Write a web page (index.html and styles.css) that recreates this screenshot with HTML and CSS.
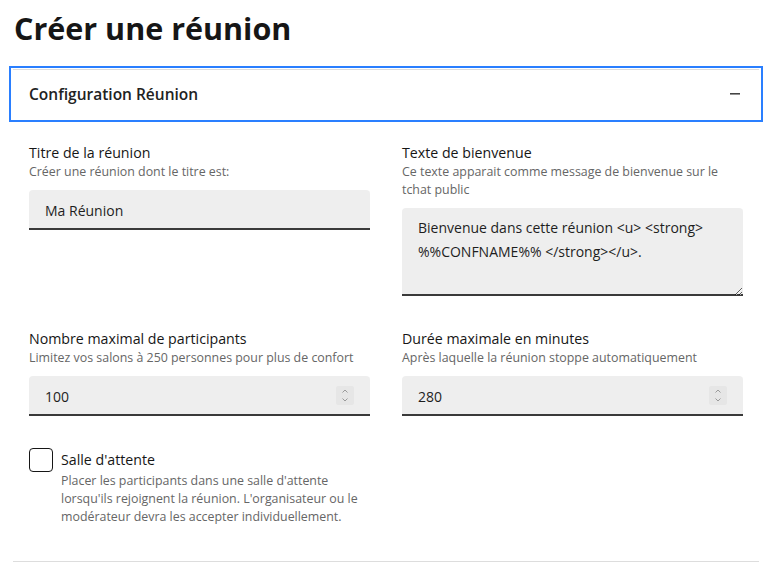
FILE: index.html
```html
<!DOCTYPE html>
<html lang="fr">
<head>
<meta charset="utf-8">
<title>Créer une réunion</title>
<link rel="stylesheet" href="styles.css">
</head>
<body>
<main class="page">
  <h1 class="page-title">Créer une réunion</h1>
  <section class="accordion">
    <button class="accordion-btn" type="button">
      <span>Configuration Réunion</span>
      <svg class="accordion-icon" width="16" height="16" viewBox="0 0 16 16" aria-hidden="true"><path d="M3 7.8h10" stroke="#3a3a3a" stroke-width="1.5" fill="none"/></svg>
    </button>
    <div class="accordion-body">
      <div class="form-grid">
        <div class="field">
          <label class="label" for="title">Titre de la réunion</label>
          <p class="hint">Créer une réunion dont le titre est:</p>
          <div class="input-wrap">
            <input class="input" id="title" type="text" value="Ma Réunion">
          </div>
        </div>
        <div class="field">
          <label class="label" for="welcome">Texte de bienvenue</label>
          <p class="hint">Ce texte apparait comme message de bienvenue sur le tchat public</p>
          <textarea class="input textarea" id="welcome" rows="3">Bienvenue dans cette réunion &lt;u&gt; &lt;strong&gt; %%CONFNAME%% &lt;/strong&gt;&lt;/u&gt;.</textarea>
        </div>
        <div class="field">
          <label class="label" for="max">Nombre maximal de participants</label>
          <p class="hint">Limitez vos salons à 250 personnes pour plus de confort</p>
          <div class="input-wrap">
            <input class="input number" id="max" type="number" value="100">
            <span class="spinner" aria-hidden="true"><svg width="18" height="19" viewBox="0 0 18 19"><path d="M6.5 6.5 9 4l2.5 2.5M6.5 12.5 9 15l2.5-2.5" stroke="#9a9a9a" stroke-width="1" fill="none"/></svg></span>
          </div>
        </div>
        <div class="field">
          <label class="label" for="dur">Durée maximale en minutes</label>
          <p class="hint">Après laquelle la réunion stoppe automatiquement</p>
          <div class="input-wrap">
            <input class="input number" id="dur" type="number" value="280">
            <span class="spinner" aria-hidden="true"><svg width="18" height="19" viewBox="0 0 18 19"><path d="M6.5 6.5 9 4l2.5 2.5M6.5 12.5 9 15l2.5-2.5" stroke="#9a9a9a" stroke-width="1" fill="none"/></svg></span>
          </div>
        </div>
      </div>
      <div class="checkbox">
        <span class="box"></span>
        <div class="checkbox-text">
          <span class="checkbox-label">Salle d'attente</span>
          <p class="hint long">Placer les participants dans une salle d'attente lorsqu'ils rejoignent la réunion. L'organisateur ou le modérateur devra les accepter individuellement.</p>
        </div>
      </div>
    </div>
  </section>
</main>
</body>
</html>
```
FILE: styles.css
```css
* { box-sizing: border-box; }
html, body { margin: 0; padding: 0; background: #fff; }
body {
  font-family: "Open Sans", "Noto Sans", sans-serif;
  color: #161616;
}
.page {
  width: 746px;
  margin-left: 13px;
}
.page-title {
  margin: 8px 0 0 1px;
  font-size: 30.5px;
  line-height: 40px;
  font-weight: 700;
  color: #161616;
}
.accordion {
  margin-top: 21px;
  border-top: 1px solid #dddddd;
  border-bottom: 1px solid #dddddd;
}
.accordion-btn {
  display: flex;
  width: 100%;
  height: 48px;
  align-items: center;
  justify-content: space-between;
  padding: 0 16px;
  border: 0;
  background: #fff;
  font-family: inherit;
  font-size: 15.5px;
  font-weight: 600;
  color: #222222;
  outline: 2px solid #2a7fff;
  outline-offset: 2px;
  text-align: left;
}
.accordion-body {
  padding: 25px 16px 35px;
}
.form-grid {
  display: grid;
  grid-template-columns: 341px 341px;
  column-gap: 32px;
  row-gap: 33px;
}
.field { display: flex; flex-direction: column; }
.label {
  font-size: 14.2px;
  line-height: 20px;
  color: #161616;
}
.hint {
  margin: 0 0 9px;
  font-size: 12.4px;
  line-height: 18px;
  color: #666666;
}
.input-wrap { position: relative; }
.input {
  display: block;
  width: 100%;
  height: 40px;
  padding: 8px 16px;
  border: 0;
  border-radius: 4px 4px 0 0;
  background: #eeeeee;
  box-shadow: inset 0 -2px 0 0 #3a3a3a;
  font-family: inherit;
  font-size: 14px;
  line-height: 24px;
  color: #1e1e1e;
  outline: none;
}
.textarea {
  height: 88px;
  resize: vertical;
}
.number { -moz-appearance: textfield; }
.number::-webkit-inner-spin-button,
.number::-webkit-outer-spin-button { -webkit-appearance: none; margin: 0; }
.spinner {
  position: absolute;
  right: 16px;
  top: 10px;
  width: 18px;
  height: 19px;
  background: #e6e6e6;
  border-radius: 2px;
  display: flex;
}
.checkbox {
  display: flex;
  gap: 8px;
  margin-top: 32px;
}
.box {
  flex: none;
  width: 24px;
  height: 24px;
  border: 1px solid #161616;
  border-radius: 4px;
}
.checkbox-label {
  display: block;
  font-size: 14.2px;
  line-height: 24px;
  color: #161616;
}
.hint.long {
  margin: 0;
  width: 300px;
}
```
